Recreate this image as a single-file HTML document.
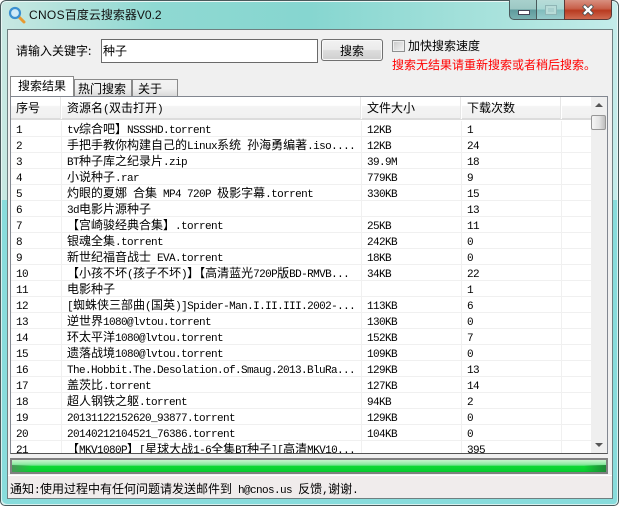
<!DOCTYPE html>
<html><head><meta charset="utf-8">
<style>
html,body{margin:0;padding:0;width:619px;height:506px;overflow:hidden;background:#fff}
*{box-sizing:border-box}
body{font:12px/16px "WenQuanYi Zen Hei","Noto Sans CJK SC",sans-serif;color:#000;white-space:pre}
div,svg{position:absolute}
i{font:normal 11px/16px "Liberation Mono",monospace;letter-spacing:-.6px}
#win{left:0;top:0;width:619px;height:506px;background:linear-gradient(#ffffff00 0,#ffffff00 100%),linear-gradient(90deg,#c8e8e2 0,#8fd9d2 25%,#86d6d0 50%,#a8e2dc 80%,#c4ecea 100%);border:1px solid #4a5a5c;border-radius:6px 6px 5px 5px;box-shadow:inset 0 0 0 1px #e8f6f4;overflow:hidden}
#low{left:1px;top:200px;width:617px;height:305px;background:#88dcdc;border-radius:0 0 5px 5px;box-shadow:inset 1px -1px 0 #d8f2f0,inset -1px 0 0 #d8f2f0}
#panel{left:7px;top:29px;width:606px;height:470px;background:#f0f0f0;border:1px solid #6f7f80}
.t{height:16px;line-height:16px}
.r{width:580px;height:16px;border-bottom:1px solid #f0f0f0;background:#fff}
.r .c{top:0;height:16px;line-height:16px}
.c0{left:5px}.c1{left:56px}.c2{left:356px}.c3{left:456px}
.v{width:1px;background:#f0f0f0}
.h{top:100px;height:16px}
.hs{top:97px;width:2px;height:22px;background:#e6e6e6;border-right:1px solid #fff}
.tab{border:1px solid #8a8a8a;border-bottom:0}
</style></head><body>
<div id="win"></div>
<div id="low"></div>
<svg style="left:8px;top:6px" width="18" height="18" viewBox="0 0 18 18"><path d="M10.5 10.5L16 16" stroke="#e89a30" stroke-width="3" stroke-linecap="round"/><circle cx="7" cy="7" r="5" fill="#cfeaf8" stroke="#3b90d0" stroke-width="2.2"/></svg>
<div class="t" style="left:29px;top:7px;font:12px/16px 'Liberation Sans','Noto Sans CJK SC',sans-serif;color:#111"><span style="letter-spacing:.3px">CNOS</span>百度云搜索器V0.2</div>
<!-- window controls -->
<div style="left:509px;top:0;width:28px;height:20px;background:linear-gradient(#a8d0cc 0,#9cc8c4 48%,#5f9a9c 52%,#78b0b0 100%);border:1px solid #4a5a5c;border-top:0;border-radius:0 0 0 5px"></div>
<div style="left:518px;top:10px;width:12px;height:5px;background:#fff;border:1px solid #445"></div>
<div style="left:537px;top:0;width:27px;height:20px;background:linear-gradient(#b8dcd8 0,#a8d8d4 48%,#80bcbc 52%,#98cccc 100%);border-bottom:1px solid #4a5a5c"></div>
<div style="left:545px;top:5px;width:12px;height:10px;border:1px solid #8fb5b5;background:#a9d0ce;box-shadow:inset 0 0 0 2px #b8dcd8"></div>
<div style="left:564px;top:0;width:48px;height:20px;background:linear-gradient(#d89080 0,#c8604a 45%,#b83a20 55%,#cf6a50 100%);border:1px solid #5a3a38;border-top:0;border-radius:0 0 5px 0"></div>
<svg style="left:582px;top:4px" width="12" height="12" viewBox="0 0 12 12"><path d="M1.5 1.5L10.5 10.5M10.5 1.5L1.5 10.5" stroke="#3c4c50" stroke-width="4"/><path d="M2 2L10 10M10 2L2 10" stroke="#fff" stroke-width="2.4"/></svg>
<div id="panel"></div>
<!-- top form -->
<div class="t" style="left:16px;top:43px">请输入关键字:</div>
<div style="left:101px;top:39px;width:217px;height:24px;background:#fff;border:1px solid #6a6a6a"></div>
<div class="t" style="left:103px;top:43px">种子</div>
<div style="left:321px;top:39px;width:62px;height:22px;border:1px solid #707070;border-radius:3px;background:linear-gradient(#f2f2f2 0,#ebebeb 48%,#dddddd 52%,#cfcfcf 100%);box-shadow:inset 0 0 0 1px #f8f8f8"></div>
<div class="t" style="left:340px;top:43px">搜索</div>
<div style="left:392px;top:40px;width:13px;height:12px;border:1px solid #8e8f8f;background:linear-gradient(135deg,#c8c8c8,#f4f4f4);box-shadow:inset 0 0 0 1px #eee"></div>
<div class="t" style="left:408px;top:38px">加快搜索速度</div>
<div class="t" style="left:392px;top:57px;color:#f00">搜索无结果请重新搜索或者稍后搜索。</div>
<!-- tabs -->
<div style="left:10px;top:96px;width:598px;height:1px;background:#8a8a8a"></div>
<div class="tab" style="left:74px;top:79px;width:58px;height:18px;background:linear-gradient(#f2f2f2,#f0f0f0 50%,#d6d6d6)"></div>
<div class="tab" style="left:132px;top:79px;width:46px;height:18px;background:linear-gradient(#f2f2f2,#f0f0f0 50%,#d6d6d6)"></div>
<div class="tab" style="left:10px;top:76px;width:64px;height:21px;background:#fff"></div>
<div class="t" style="left:18px;top:78px">搜索结果</div>
<div class="t" style="left:78px;top:81px">热门搜索</div>
<div class="t" style="left:138px;top:81px">关于</div>
<!-- list -->
<div style="left:10px;top:96px;width:598px;height:358px;background:#fff;border:1px solid #828790;border-bottom-color:#555;overflow:hidden" id="list"></div>
<div style="left:11px;top:97px;width:580px;height:23px;background:linear-gradient(#fff 0,#fff 40%,#f4f4f4 45%,#f0f0f0 100%);border-bottom:2px solid #dcdcdc"></div>
<div class="t h" style="left:16px">序号</div>
<div class="t h" style="left:67px">资源名<i>(</i>双击打开<i>)</i></div>
<div class="t h" style="left:367px">文件大小</div>
<div class="t h" style="left:467px">下载次数</div>
<div class="hs" style="left:60px"></div><div class="hs" style="left:360px"></div><div class="hs" style="left:460px"></div><div class="hs" style="left:560px"></div>
<div style="left:11px;top:121px;width:580px;height:332px;overflow:hidden">
<div class="r" style="left:0;top:0"><div class="c c0"><i>1</i></div><div class="c c1"><i>tv</i>综合吧】<i>NSSSHD.torrent</i></div><div class="c c2"><i>12KB</i></div><div class="c c3"><i>1</i></div></div>
<div class="r" style="left:0;top:16px"><div class="c c0"><i>2</i></div><div class="c c1">手把手教你构建自己的<i>Linux</i>系统<i> </i>孙海勇编著<i>.iso....</i></div><div class="c c2"><i>12KB</i></div><div class="c c3"><i>24</i></div></div>
<div class="r" style="left:0;top:32px"><div class="c c0"><i>3</i></div><div class="c c1"><i>BT</i>种子库之纪录片<i>.zip</i></div><div class="c c2"><i>39.9M</i></div><div class="c c3"><i>18</i></div></div>
<div class="r" style="left:0;top:48px"><div class="c c0"><i>4</i></div><div class="c c1">小说种子<i>.rar</i></div><div class="c c2"><i>779KB</i></div><div class="c c3"><i>9</i></div></div>
<div class="r" style="left:0;top:64px"><div class="c c0"><i>5</i></div><div class="c c1">灼眼的夏娜<i> </i>合集<i> MP4 720P </i>极影字幕<i>.torrent</i></div><div class="c c2"><i>330KB</i></div><div class="c c3"><i>15</i></div></div>
<div class="r" style="left:0;top:80px"><div class="c c0"><i>6</i></div><div class="c c1"><i>3d</i>电影片源种子</div><div class="c c3"><i>13</i></div></div>
<div class="r" style="left:0;top:96px"><div class="c c0"><i>7</i></div><div class="c c1">【宫崎骏经典合集】<i>.torrent</i></div><div class="c c2"><i>25KB</i></div><div class="c c3"><i>11</i></div></div>
<div class="r" style="left:0;top:112px"><div class="c c0"><i>8</i></div><div class="c c1">银魂全集<i>.torrent</i></div><div class="c c2"><i>242KB</i></div><div class="c c3"><i>0</i></div></div>
<div class="r" style="left:0;top:128px"><div class="c c0"><i>9</i></div><div class="c c1">新世纪福音战士<i> EVA.torrent</i></div><div class="c c2"><i>18KB</i></div><div class="c c3"><i>0</i></div></div>
<div class="r" style="left:0;top:144px"><div class="c c0"><i>10</i></div><div class="c c1">【小孩不坏<i>(</i>孩子不坏<i>)</i>】【高清蓝光<i>720P</i>版<i>BD-RMVB...</i></div><div class="c c2"><i>34KB</i></div><div class="c c3"><i>22</i></div></div>
<div class="r" style="left:0;top:160px"><div class="c c0"><i>11</i></div><div class="c c1">电影种子</div><div class="c c3"><i>1</i></div></div>
<div class="r" style="left:0;top:176px"><div class="c c0"><i>12</i></div><div class="c c1"><i>[</i>蜘蛛侠三部曲<i>(</i>国英<i>)]Spider-Man.I.II.III.2002-...</i></div><div class="c c2"><i>113KB</i></div><div class="c c3"><i>6</i></div></div>
<div class="r" style="left:0;top:192px"><div class="c c0"><i>13</i></div><div class="c c1">逆世界<i>1080@lvtou.torrent</i></div><div class="c c2"><i>130KB</i></div><div class="c c3"><i>0</i></div></div>
<div class="r" style="left:0;top:208px"><div class="c c0"><i>14</i></div><div class="c c1">环太平洋<i>1080@lvtou.torrent</i></div><div class="c c2"><i>152KB</i></div><div class="c c3"><i>7</i></div></div>
<div class="r" style="left:0;top:224px"><div class="c c0"><i>15</i></div><div class="c c1">遗落战境<i>1080@lvtou.torrent</i></div><div class="c c2"><i>109KB</i></div><div class="c c3"><i>0</i></div></div>
<div class="r" style="left:0;top:240px"><div class="c c0"><i>16</i></div><div class="c c1"><i>The.Hobbit.The.Desolation.of.Smaug.2013.BluRa...</i></div><div class="c c2"><i>129KB</i></div><div class="c c3"><i>13</i></div></div>
<div class="r" style="left:0;top:256px"><div class="c c0"><i>17</i></div><div class="c c1">盖茨比<i>.torrent</i></div><div class="c c2"><i>127KB</i></div><div class="c c3"><i>14</i></div></div>
<div class="r" style="left:0;top:272px"><div class="c c0"><i>18</i></div><div class="c c1">超人钢铁之躯<i>.torrent</i></div><div class="c c2"><i>94KB</i></div><div class="c c3"><i>2</i></div></div>
<div class="r" style="left:0;top:288px"><div class="c c0"><i>19</i></div><div class="c c1"><i>20131122152620_93877.torrent</i></div><div class="c c2"><i>129KB</i></div><div class="c c3"><i>0</i></div></div>
<div class="r" style="left:0;top:304px"><div class="c c0"><i>20</i></div><div class="c c1"><i>20140212104521_76386.torrent</i></div><div class="c c2"><i>104KB</i></div><div class="c c3"><i>0</i></div></div>
<div class="r" style="left:0;top:320px"><div class="c c0"><i>21</i></div><div class="c c1">【<i>MKV1080P</i>】<i>[</i>星球大战<i>1-6</i>全集<i>BT</i>种子<i>][</i>高清<i>MKV10...</i></div><div class="c c3"><i>395</i></div></div>
<div class="v" style="left:50px;top:0;height:332px"></div><div class="v" style="left:350px;top:0;height:332px"></div><div class="v" style="left:450px;top:0;height:332px"></div><div class="v" style="left:550px;top:0;height:332px"></div>
</div>
<!-- scrollbar -->
<div style="left:591px;top:97px;width:16px;height:356px;background:#efefef"></div>
<svg style="left:594px;top:102px" width="10" height="6"><path d="M1 5H9L5 1Z" fill="#555"/></svg>
<svg style="left:594px;top:442px" width="10" height="6"><path d="M1 1H9L5 5Z" fill="#555"/></svg>
<div style="left:591px;top:115px;width:15px;height:15px;border:1px solid #979797;border-radius:2px;background:linear-gradient(90deg,#f6f6f6,#e4e4e4 55%,#bdbdbd)"></div>
<!-- progress -->
<div style="left:10px;top:458px;width:598px;height:16px;border:2px solid #808080;background:linear-gradient(#c8f4cc 0,#98ecaa 30%,#6ee48a 45%,#10d834 50%,#08d030 90%,#06c02c 100%)"></div>
<div style="left:12px;top:465px;width:20px;height:7px;background:linear-gradient(90deg,#489858,rgba(8,208,48,0))"></div>
<div style="left:584px;top:465px;width:22px;height:7px;background:linear-gradient(270deg,#208838,rgba(8,208,48,0))"></div>
<!-- status -->
<div style="left:8px;top:475px;width:604px;height:23px;background:#f0ecec;border-top:1px solid #fff"></div>
<div class="t" style="left:10px;top:481px">通知<i>:</i>使用过程中有任何问题请发送邮件到<i> h@cnos.us </i>反馈<i>,</i>谢谢<i>.</i></div>
</body></html>
